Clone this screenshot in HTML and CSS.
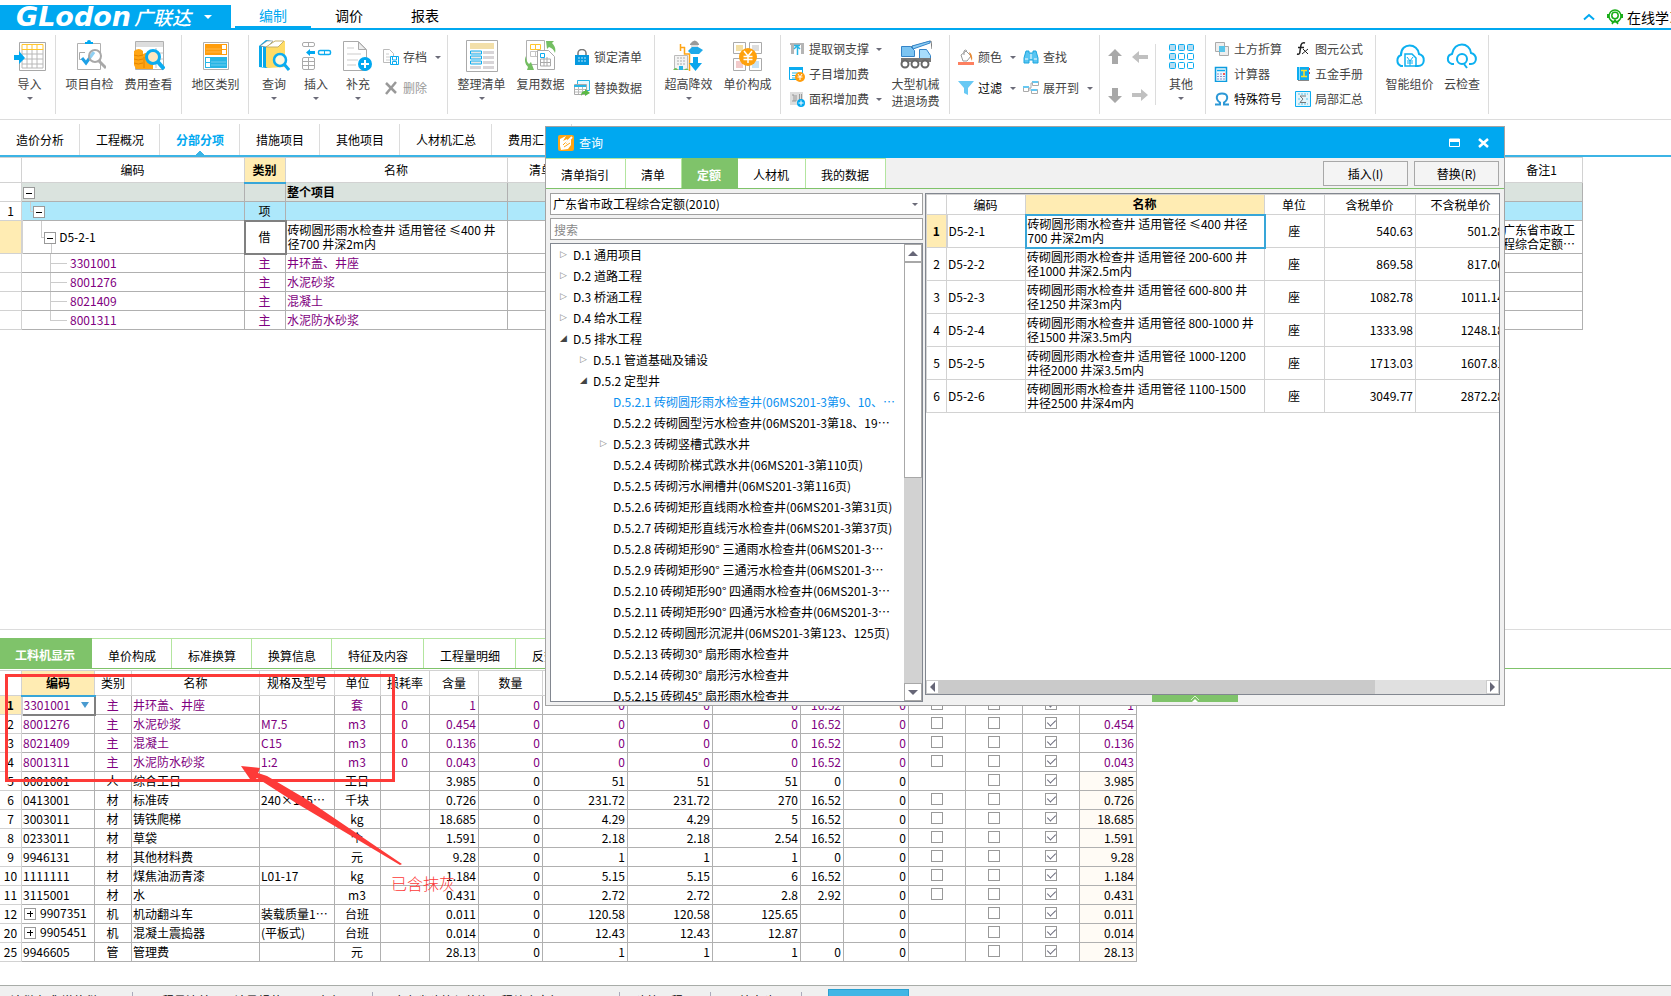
FILE: index.html
```
<!DOCTYPE html>
<html lang="zh-CN">
<head>
<meta charset="UTF-8" />
<meta name="viewport" content="width=device-width, initial-scale=1" />
<title>广联达 - 分部分项</title>
<link rel="stylesheet" href="styles.css">
</head>
<body>

<header class="topbar">
  <button class="logo" type="button"><span class="logo-en">GLodon</span><span class="logo-cn">广联达</span><i class="caret"></i></button>
  <nav class="menu">
    <a href="#" class="active">编制</a>
    <a href="#">调价</a>
    <a href="#">报表</a>
  </nav>
  <div class="online">
    <svg width="12" height="8" viewBox="0 0 12 8"><path d="M1 6.500 6 2l5 4.500" fill="none" stroke="#00a8f0" stroke-width="2"/></svg>
    <svg width="16" height="16" viewBox="0 0 16 16" fill="none" stroke="#1aad19"><circle cx="8" cy="7" r="6" stroke-width="1.500"/><circle cx="8" cy="6.500" r="3.200" stroke-width="1.500"/><path d="M1 5v4M15 5v4" stroke-width="2.500"/><path d="M5 15l3-4 3 4M4 11l2 3M12 11l-2 3" stroke-width="1.500"/></svg>
    <a href="#">在线学习</a>
  </div>
</header>

<div class="ribbon">
  <div class="group">
    <button class="big wide" type="button">
      <svg width="32" height="32" viewBox="0 0 32 32"><path d="M5.500 2.500h26v28h-26z" fill="#fff" stroke="#a8a8a8"/><path d="M8 14h21M8 19h21M8 24h21M13 9v19M18 9v19M23 9v19M8 28h21V9M8 9v19" fill="none" stroke="#b8b8b8"/><path d="M8 4.500h21v5H8zM13 4v5M18 4v5M23 4v5" fill="none" stroke="#ffc52e"/><path d="M0 15h5v-4l6 7-6 6v-4H0z" fill="#00a8f0"/></svg>
      <span>导入</span><i class="caret"></i>
    </button>
  </div>
  <div class="group">
    <button class="big" type="button">
      <svg width="32" height="32" viewBox="0 0 32 32"><path d="M3.500 3.500h23v26h-23z" fill="#fff" stroke="#b0b0b0"/><path d="M11 4V2h2a2 2 0 0 1 4 0h2v2z" fill="#00a8f0"/><path d="M11 12.500H5.500v7H8" fill="none" stroke="#a8a8a8"/><path d="m8 18 4 5 8-11" fill="none" stroke="#1ea0e6" stroke-width="3"/><circle cx="21" cy="16" r="6" fill="#fff" fill-opacity=".5" stroke="#a8a8a8" stroke-width="2"/><path d="m25 21 7 7" stroke="#a8a8a8" stroke-width="3"/></svg>
      <span>项目自检</span>
    </button>
    <button class="big" type="button">
      <svg width="32" height="32" viewBox="0 0 32 32"><path d="M2.500 1.500h28v28h-28z" fill="#fff" stroke="#b0b0b0"/><path d="M3 2h27v5H3z" fill="#ddd"/><path d="M20 13h10M20 19h10M23 8v20" stroke="#c4c4c4"/><path d="M1 11q5-4 9 0v3q5-3 10 0v15H3l-2-4z" fill="#ffa514"/><path d="M1 15q4 2 9 0M1 19q4 2 9 0M1 23q4 2 9 0M11 17v11" fill="none" stroke="#e38400"/><circle cx="20" cy="17" r="6.500" fill="#ffe8c0" stroke="#0cacf0" stroke-width="3"/><path d="m25 22 6 7" stroke="#0cacf0" stroke-width="4"/></svg>
      <span>费用查看</span>
    </button>
  </div>
  <div class="group">
    <button class="big" type="button">
      <svg width="32" height="32" viewBox="0 0 32 32"><path d="M3.500 2.500h25v27h-25z" fill="#fff" stroke="#b0b0b0"/><path d="M5 4h22v11H5z" fill="#ff9d0c"/><path d="M6 9h15M6 12h15" stroke="#ffb84c"/><path d="M22 5h4v4h-4zM22 10h4v4h-4z" fill="#fff"/><path d="M5 17h22v11H5z" fill="#27b5e5"/><path d="M11 22h15M11 25h15" stroke="#6fcdee"/><path d="M6 18h4v4H6zM6 23h4v4H6z" fill="#fff"/></svg>
      <span>地区类别</span>
    </button>
  </div>
  <div class="group">
    <button class="big narrow" type="button">
      <svg width="32" height="32" viewBox="0 0 32 32"><path d="m1 6 7-6 6 1v26l-6 1-7-1z" fill="#07a8ea"/><path d="M4.500 7v20" stroke="#fff"/><path d="m2 6 7-5 6 0-6 6z" fill="#fff" stroke="#777" stroke-width=".5"/><path d="m8 7 9-6h10v26l-17 1-2-1z" fill="#ffdc66"/><path d="m8 7 9-6h9l-6 6z" fill="#fff" stroke="#c5b06a"/><circle cx="22" cy="20" r="6" fill="#fff8df" stroke="#0cacf0" stroke-width="2.500"/><path d="m26 24 5 6" stroke="#0cacf0" stroke-width="3"/></svg>
      <span>查询</span><i class="caret"></i>
    </button>
    <button class="big narrow" type="button">
      <svg width="32" height="32" viewBox="0 0 32 32" fill="none"><rect x="2.500" y="2.500" width="12" height="4" rx="1.500" stroke="#aaa"/><path d="M8.500 2v4" stroke="#aaa"/><rect x="18.500" y="10.500" width="12" height="4" rx="1.500" stroke="#0cacf0" stroke-width="1.500"/><path d="M24.500 10v4" stroke="#0cacf0"/><path d="M6 12.500 10 9v2h5v3h-5v2z" fill="#00a8f0"/><rect x="2.500" y="17.500" width="12" height="12" rx="1.500" stroke="#aaa"/><path d="M2 21.500h12M2 25.500h12M8.500 18v11" stroke="#aaa"/></svg>
      <span>插入</span><i class="caret"></i>
    </button>
    <button class="big narrow" type="button">
      <svg width="32" height="32" viewBox="0 0 32 32"><path d="M1.500 1.500h15l8 8v21h-23z" fill="#fff" stroke="#aaa"/><path d="M16.500 2v7.500H24z" fill="#eee" stroke="#aaa"/><path d="M5 8h7M5 14h14M5 20h11M5 25h9" stroke="#ddd" stroke-width="1.500"/><circle cx="23" cy="24" r="7" fill="#00a8f0"/><path d="M23 20v8M19 24h8" stroke="#fff" stroke-width="2"/></svg>
      <span>补充</span><i class="caret"></i>
    </button>
    <div class="stack two">
      <button class="small" type="button">
        <svg width="16" height="16" viewBox="0 0 16 16"><path d="M.5.500h6l4 4v9H.5z" fill="#fff" stroke="#bbb"/><path d="M3 5h3M3 8h4M3 11h4" stroke="#ccc"/><path d="M7.500 7.500h8v8h-8z" fill="#fff" stroke="#0cacf0"/><path d="M9.500 8v3h4V8M9.500 15v-2.500h4V15" fill="none" stroke="#0cacf0"/></svg>
        <span>存档</span><i class="caret"></i>
      </button>
      <button class="small" type="button" disabled>
        <svg width="16" height="16" viewBox="0 0 16 16"><path d="m3 3 10 10M13 2 3 14" stroke="#999" stroke-width="2.500"/></svg>
        <span>删除</span>
      </button>
    </div>
  </div>
  <div class="group reuse">
    <button class="big" type="button">
      <svg width="32" height="32" viewBox="0 0 32 32"><path d="M.5.500h31v31H.5z" fill="#fff" stroke="#aaa"/><path d="M4 3h24v6H4z" fill="#f2dfaa"/><path d="M17 11h11v3H17zM17 16h11v3H17zM17 21h11v3H17zM4 26h11v3H4zM17 26h11v3H17z" fill="#d8d5d8"/><path d="M4.500 11h11v3h-11zM4.500 16h11v3h-11zM4.500 21h11v3h-11z" fill="#e8e8e8" stroke="#0cacf0"/></svg>
      <span>整理清单</span><i class="caret"></i>
    </button>
    <button class="big" type="button">
      <svg width="32" height="32" viewBox="0 0 32 32"><path d="M1.500.500h18v24h-18z" fill="#fff" stroke="#b0b0b0"/><path d="M5.500 4.500h10v5h-10zM10.500 4v5" fill="none" stroke="#ffc52e"/><path d="M5.500 11.500h10v5h-10zM10.500 11v5" fill="none" stroke="#c4c4c4"/><path d="M12.500 10.500h11l6 6v13h-17z" fill="#fff" stroke="#a8a8a8"/><path d="M15.500 19v7h10v-7zM19 17v9M22 17v9M15 22.500h10" fill="none" stroke="#aaa"/><path d="M15.500 13.500h4v4h-4z" fill="#fff" stroke="#0cacf0"/><path d="M21 1h8l-2 2c3 3 4 6 3 10-1-3-3-5-6-6l-2 2zM1 16c0 4 1 6 3 8l2-2 3 8H2l1-3C0 24-1 20 1 16z" fill="#74be62"/></svg>
      <span>复用数据</span>
    </button>
    <div class="stack two">
      <button class="small" type="button">
        <svg width="16" height="16" viewBox="0 0 16 16"><path d="M4 6V4a4 3.500 0 0 1 8 0v2" fill="none" stroke="#777" stroke-width="1.500"/><path d="M1 6h14v10H1z" fill="#0599df"/><path d="M4 9h8M4 12h8" stroke="#b8e6fb" stroke-dasharray="2 1"/></svg>
        <span>锁定清单</span>
      </button>
      <button class="small" type="button">
        <svg width="16" height="16" viewBox="0 0 16 16"><path d="M3.500.500h12v10h-12z" fill="#e9f7fd" stroke="#27b5e5"/><path d="M.5 4.500h12v10H.5z" fill="#fff" stroke="#aaa"/><path d="M0 5h12v2H0z" fill="#27b5e5"/><path d="M1 9.500h11M1 12h11M4.500 7v7M8.500 7v7" stroke="#bbb"/><path d="M7 16c0-4 2-5 4-5V9l5 4-5 3v-2c-2 0-3 0-4 2z" fill="#5ab946"/></svg>
        <span>替换数据</span>
      </button>
    </div>
  </div>
  <div class="group">
    <button class="big" type="button">
      <svg width="32" height="32" viewBox="0 0 32 32"><path d="M1.500 15.500h13v14h-13z" fill="#f4f4f4" stroke="#bbb"/><path d="M4 18h9M4 21h9M4 24h9" stroke="#c4c4c4" stroke-width="1.500" stroke-dasharray="2 1"/><path d="M0 30q3-4 5 0M11 30q2-3 5 0" fill="#6cbd58"/><path d="M6 26h4v4H6z" fill="#27b5e5"/><path d="M7.500 4v7M7 7.500h5M11.500 7v7h5v17" fill="none" stroke="#ffa514" stroke-width="1.500"/><path d="M17 4q5-7 9 0v1h-9z" fill="#999"/><path d="M18 5h7v3h-7z" fill="#ddd"/><path d="m15 11 4-4h6l5 3-4 4h-8z" fill="#1ea9e9"/><path d="M20 17h5v6h4l-6.500 8L16 23h4z" fill="#0ca6ed"/></svg>
      <span>超高降效</span><i class="caret"></i>
    </button>
    <button class="big" type="button">
      <svg width="32" height="32" viewBox="0 0 32 32"><path d="M1.500 2.500h12v11h-12zM17.500 2.500h12v11h-12zM1.500 18.500h12v12h-12zM17.500 18.500h12v12h-12z" fill="#fff" stroke="#aaa"/><path d="M4 5h7v6H4z" fill="#f3dfa4"/><path d="M20 5h7v6h-7z" fill="#ddd"/><path d="M4 21h7v7H4z" fill="#f2caca"/><path d="M20 21h7v7h-7z" fill="#c7e2f4"/><circle cx="16" cy="17" r="9" fill="#ffa10c"/><path d="m12 11 4 5 4-5M11.500 16.500h9M11.500 19.500h9M16 16v7" fill="none" stroke="#fff" stroke-width="1.500"/></svg>
      <span>单价构成</span>
    </button>
  </div>
  <div class="group">
    <div class="stack three wide-stack">
      <button class="small" type="button">
        <svg width="16" height="16" viewBox="0 0 16 16"><path d="M1 2h14v2H1zM2 4h3v9H2zM12 4h3v9h-3z" fill="#b5b5b5"/><path d="M5 4.500h6M8.500 4v10M5 8l3-3 3 3" fill="none" stroke="#27b5e5" stroke-width="1.500"/></svg>
        <span>提取钢支撑</span><i class="caret"></i>
      </button>
      <button class="small" type="button">
        <svg width="16" height="16" viewBox="0 0 16 16"><path d="M.5 1.500h13v12H.5z" fill="#fff" stroke="#0cacf0"/><path d="M0 1h14v3H0z" fill="#0cacf0"/><path d="M3 7h8M3 9.500h5M3 12h5" stroke="#27b5e5"/><circle cx="11" cy="11" r="5" fill="#ff9d0c"/><path d="m9 8 2 3 2-3M8.500 11h5M11 11v3" fill="none" stroke="#fff"/></svg>
        <span>子目增加费</span>
      </button>
      <button class="small" type="button">
        <svg width="16" height="16" viewBox="0 0 16 16"><path d="M1 1h13v13H1z" fill="#ddd"/><path d="M3 4h2v6M7 4v6H3M10.500 3v7M12.500 3v7" fill="none" stroke="#999"/><circle cx="12" cy="12" r="4" fill="#00a8f0"/><path d="M12 9.500v5M9.500 12h5" stroke="#fff"/></svg>
        <span>面积增加费</span><i class="caret"></i>
      </button>
    </div>
    <button class="big crane" type="button">
      <svg width="32" height="32" viewBox="0 0 32 32"><path d="M10 7 31 1l1 8" fill="none" stroke="#777"/><path d="m12 6 18-5v2L13 9z" fill="#8ccdf5" stroke="#3484c8"/><path d="M1.500 6.500h9l4 4v6h-13z" fill="#7cc4f2" stroke="#3484c8"/><path d="M19.500 9.500h7l4 6v5h-11z" fill="#a8dcfa" stroke="#3484c8"/><path d="M1 18h30v4H1z" fill="#777"/><g fill="#fff" stroke="#666" stroke-width="2"><circle cx="5" cy="24" r="3.500"/><circle cx="15" cy="24" r="3.500"/><circle cx="25" cy="24" r="3.500"/></g></svg>
      <span>大型机械<br>进退场费</span>
    </button>
  </div>
  <div class="group">
    <div class="stack two">
      <button class="small" type="button">
        <svg width="16" height="16" viewBox="0 0 16 16"><path d="m3 6 5-4 5 5-4 5H5z" fill="#fff" stroke="#999"/><path d="M6 6V2q1-2 3 0" fill="none" stroke="#999"/><path d="M11 3q4 2 3 9-1-2-2-5z" fill="#e88a34"/><path d="M0 13h16v3H0z" fill="#fd8060"/></svg>
        <span>颜色</span><i class="caret"></i>
      </button>
      <button class="small" type="button">
        <svg width="16" height="16" viewBox="0 0 16 16"><path d="M0 1h16l-6 7v7l-4-2V8z" fill="#68c9f4"/></svg>
        <span class="dark">过滤</span><i class="caret"></i>
      </button>
    </div>
    <div class="stack two">
      <button class="small" type="button">
        <svg width="16" height="16" viewBox="0 0 16 16"><path d="M3 2h3v2h4V2h3l2 7v5h-5v-3H6v3H1V9z" fill="#58c5f2" stroke="#1ca6df"/><path d="M2 10h3M11 10h3M8 5v5" stroke="#fff"/></svg>
        <span>查找</span>
      </button>
      <button class="small" type="button">
        <svg width="16" height="16" viewBox="0 0 16 16"><path d="M.5 6.500h5v5h-5zM9.500 1.500h6v4h-6zM8.500 9.500h6v4h-6z" fill="#fff" stroke="#aaa"/><path d="M0 6h6v2H0zM9 1h6v2H9zM8 9h6v2H8z" fill="#66c8f2"/><path d="M6 8h2V3h2M7 8v3" fill="none" stroke="#aaa"/></svg>
        <span>展开到</span><i class="caret"></i>
      </button>
    </div>
  </div>
  <div class="arrows">
    <button type="button" aria-label="上移"><svg width="16" height="16" viewBox="0 0 16 16"><path d="m8 0 7 7h-4v8H5V7H1z" fill="#a8a8a8"/></svg></button>
    <button type="button" aria-label="左移"><svg width="16" height="16" viewBox="0 0 16 16"><path d="m0 8 7-6v4h9v4H7v4z" fill="#c0c0c0"/></svg></button>
    <button type="button" aria-label="下移"><svg width="16" height="16" viewBox="0 0 16 16"><path d="m8 16 7-7h-4V1H5v8H1z" fill="#a8a8a8"/></svg></button>
    <button type="button" aria-label="右移"><svg width="16" height="16" viewBox="0 0 16 16"><path d="m16 8-7-6v4H0v4h9v4z" fill="#c0c0c0"/></svg></button>
  </div>
  <div class="group">
    <button class="big narrow" type="button">
      <svg width="32" height="32" viewBox="0 0 32 32" fill="#b5ddf2" stroke="#0cacf0"><rect x="4.500" y="4.500" width="6" height="6" rx="1"/><rect x="13.500" y="4.500" width="6" height="6" rx="1"/><rect x="22.500" y="4.500" width="6" height="6" rx="1"/><rect x="4.500" y="13.500" width="6" height="6" rx="1"/><rect x="13.500" y="13.500" width="6" height="6" rx="1" fill="#fff"/><rect x="22.500" y="13.500" width="6" height="6" rx="1" fill="#fff"/><rect x="4.500" y="22.500" width="6" height="6" rx="1"/><rect x="13.500" y="22.500" width="6" height="6" rx="1" fill="#fff"/><rect x="22.500" y="22.500" width="6" height="6" rx="1" fill="#fff"/></svg>
      <span>其他</span><i class="caret"></i>
    </button>
  </div>
  <div class="group tools">
    <div class="stack three">
      <button class="small" type="button">
        <svg width="16" height="16" viewBox="0 0 16 16"><path d="M1.500 1.500h9v9h-9zM5.500 5.500h9v9h-9z" fill="#eee" stroke="#aaa"/><path d="M5 5h6v6H5z" fill="#58c5ea"/></svg>
        <span>土方折算</span>
      </button>
      <button class="small" type="button">
        <svg width="16" height="16" viewBox="0 0 16 16"><path d="M1.500 1.500h11v14h-11z" fill="#eef8fd" stroke="#0c9ce0" stroke-width="1.500"/><path d="M3 4.500h8" stroke="#0cacf0" stroke-width="1.500"/><path d="M3 8h6M3 10.500h8M3 13h8" stroke="#8a8fd0" stroke-dasharray="2 1"/><path d="M9 7h2v2H9z" fill="#f55"/></svg>
        <span>计算器</span>
      </button>
      <button class="small" type="button">
        <svg width="16" height="16" viewBox="0 0 16 16"><path d="M1 13.500h5v-2C1 8 2 2.500 8 2.500S15 8 10 11.500v2h5" fill="none" stroke="#2c98d6" stroke-width="2"/></svg>
        <span class="dark">特殊符号</span>
      </button>
    </div>
    <div class="stack three">
      <button class="small" type="button">
        <svg width="16" height="16" viewBox="0 0 16 16" fill="none" stroke="#222"><path d="M2 13q3 1 3-3l1-6q1-3 4-2M3 6.500h6" stroke-width="1.500"/><path d="m8 8 5 5M13 8l-6 5"/></svg>
        <span>图元公式</span>
      </button>
      <button class="small" type="button">
        <svg width="16" height="16" viewBox="0 0 16 16"><path d="M2 1h12v13H2z" fill="#0cacf0"/><path d="M3 14.500h11" stroke="#888"/><path d="M6 4.500h6M9 4v6M6 10.500h6" stroke="#fde02c" stroke-width="1.500"/><path d="M4.500 1v13" stroke="#8adcff"/><path d="M14 2h1v2h-1zM14 6h1v2h-1z" fill="#e44"/></svg>
        <span>五金手册</span>
      </button>
      <button class="small" type="button">
        <svg width="16" height="16" viewBox="0 0 16 16"><path d="M.5.500h15v15H.5z" fill="#e3f4fb" stroke="#0cacf0"/><path d="M3 3h10M3 8h2M11 8h2M3 13h10" stroke="#58c5ea" stroke-dasharray="2 1"/><path d="M11 5H5l3 3-3 3.500h6" fill="none" stroke="#777"/></svg>
        <span>局部汇总</span>
      </button>
    </div>
  </div>
  <div class="group">
    <button class="big" type="button">
      <svg width="32" height="32" viewBox="0 0 32 32" fill="none" stroke="#0cb0f0" stroke-width="2"><path d="M9 26H7a6 6 0 0 1 0-11C7 2 24 3 25 14c7 2 6 12-1 12h-3"/><path d="M11 26V14h7l4 4v8z" stroke-width="1.500"/><path d="m13 17 3 4 3-4M13 21h6M13 23h6M16 21v5" stroke-width="1"/></svg>
      <span>智能组价</span>
    </button>
    <button class="big cloud-check" type="button">
      <svg width="32" height="32" viewBox="0 0 32 32" fill="none" stroke="#0cb0f0" stroke-width="2"><path d="M8 24H6C0 22 1 15 6 14 8 1 24 2 25 13c7 2 6 11 0 11h-2"/><circle cx="16" cy="19" r="5"/><path d="m18 24 3 4"/></svg>
      <span>云检查</span>
    </button>
  </div>
</div>

<nav class="pages">
  <a href="#">造价分析</a>
  <a href="#">工程概况</a>
  <a href="#" class="active">分部分项</a>
  <a href="#">措施项目</a>
  <a href="#">其他项目</a>
  <a href="#">人材机汇总</a>
  <a href="#">费用汇总</a>
</nav>

<main>
  <section class="bill">
    <table class="grid bill-table">
      <colgroup><col class="c22"><col class="c223"><col class="c41"><col class="c222"><col class="c104"><col class="c890"><col class="c81"></colgroup>
      <thead>
        <tr><th></th><th>编码</th><th class="picked">类别</th><th>名称</th><th>清单工程量</th><th></th><th>备注1</th></tr>
      </thead>
      <tbody>
        <tr class="total"><td class="no"></td><td class="code"><button class="fold" type="button" aria-label="收起"></button></td><td></td><td><b>整个项目</b></td><td></td><td></td><td></td></tr>
        <tr class="section"><td class="no">1</td><td class="code lv1"><button class="fold" type="button" aria-label="收起"></button></td><td class="mid">项</td><td></td><td></td><td></td><td></td></tr>
        <tr class="item"><td class="no current"></td><td class="code lv2"><button class="fold" type="button" aria-label="收起"></button> D5-2-1</td><td class="mid cell-focus">借</td><td>砖砌圆形雨水检查井 适用管径 ≤400 井<br>径700 井深2m内</td><td></td><td></td><td>广东省市政工<br>程综合定额…</td></tr>
        <tr class="main-mat"><td class="no"></td><td class="code lv3">3301001</td><td class="mid">主</td><td>井环盖、井座</td><td></td><td></td><td></td></tr>
        <tr class="main-mat"><td class="no"></td><td class="code lv3">8001276</td><td class="mid">主</td><td>水泥砂浆</td><td></td><td></td><td></td></tr>
        <tr class="main-mat"><td class="no"></td><td class="code lv3">8021409</td><td class="mid">主</td><td>混凝土</td><td></td><td></td><td></td></tr>
        <tr class="main-mat"><td class="no"></td><td class="code lv3 last">8001311</td><td class="mid">主</td><td>水泥防水砂浆</td><td></td><td></td><td></td></tr>
      </tbody>
    </table>
  </section>

  <section class="detail">
    <nav class="tabs">
      <a href="#" class="active">工料机显示</a>
      <a href="#">单价构成</a>
      <a href="#">标准换算</a>
      <a href="#">换算信息</a>
      <a href="#">特征及内容</a>
      <a href="#">工程量明细</a>
      <a href="#">反查图形</a>
    </nav>
    <table class="grid detail-table">
      <colgroup><col class="c22"><col class="c73"><col class="c38"><col class="c127"><col class="c75"><col class="c46"><col class="c49"><col class="c49"><col class="c64"><col class="c85"><col class="c85"><col class="c88"><col class="c43"><col class="c65"><col class="c57"><col class="c57"><col class="c57"><col class="c57"></colgroup>
      <thead>
        <tr><th></th><th class="picked">编码</th><th>类别</th><th>名称</th><th>规格及型号</th><th>单位</th><th>损耗率</th><th>含量</th><th>数量</th><th></th><th></th><th></th><th></th><th></th><th></th><th></th><th></th><th></th></tr>
      </thead>
      <tbody id="detailRows"></tbody>
    </table>
  </section>
</main>

<footer class="status">
  <span class="s1">计税方式:增值税</span>
  <span class="s2">工程量清单项目计量规范(2013-广东)</span>
  <span class="s3">广东省建筑与装饰工程综合定额(2010)</span>
  <span class="s4">建筑工程</span>
  <span class="s5">纯土建</span>
  <button type="button" aria-label="缩放"></button>
</footer>

<!-- query window -->
<div class="dialog" role="dialog" aria-labelledby="dialogTitle">
  <div class="dialog-title">
    <svg width="16" height="16" viewBox="0 0 16 16"><rect width="16" height="16" rx="2" fill="#ffa514"/><path d="m2 4 6-3-3 5 4-2 1 2 3-2v6l-3 4-7 1-1-4z" fill="#fff"/><path d="m5 10 4-4 3-1M6 12l6-4M8 9l6-7" fill="none" stroke="#ffa514"/><path d="m8 8 6-6" stroke="#fff" stroke-width="2"/></svg>
    <span id="dialogTitle">查询</span>
    <button type="button" aria-label="最大化"><svg width="12" height="10" viewBox="0 0 12 10"><path d="M.5 1h10v7.500H.5z" fill="none" stroke="#fff"/><path d="M0 1h11v3H0z" fill="#fff"/></svg></button>
    <button type="button" aria-label="关闭"><svg width="12" height="10" viewBox="0 0 12 10"><path d="m1 1 9 8M10 1 1 9" stroke="#fff" stroke-width="2.500"/></svg></button>
  </div>
  <div class="dialog-bar">
    <nav class="tabs">
      <a href="#">清单指引</a>
      <a href="#">清单</a>
      <a href="#" class="active">定额</a>
      <a href="#">人材机</a>
      <a href="#">我的数据</a>
    </nav>
    <button type="button" class="cmd">插入(I)</button>
    <button type="button" class="cmd">替换(R)</button>
  </div>
  <div class="dialog-body">
    <div class="left">
      <div class="library">
        <select aria-label="定额库"><option>广东省市政工程综合定额(2010)</option></select>
        <i class="caret"></i>
      </div>
      <input type="text" placeholder="搜索" aria-label="搜索">
      <div class="tree">
        <ul id="treeList"></ul>
        <div class="vbar"><i class="up"></i><i class="thumb"></i><i class="down"></i></div>
      </div>
    </div>
    <div class="right">
      <div class="quota">
        <div class="quota-view">
          <table class="grid quota-table">
            <colgroup><col class="c20"><col class="c79"><col class="c239"><col class="c60"><col class="c91"><col class="c91"></colgroup>
            <thead><tr><th></th><th>编码</th><th class="picked">名称</th><th>单位</th><th>含税单价</th><th>不含税单价</th></tr></thead>
            <tbody id="quotaRows"></tbody>
          </table>
        </div>
        <div class="hbar"><i class="prev"></i><i class="thumb"></i><i class="next"></i></div>
      </div>
      <button type="button" class="drawer" aria-label="展开"><svg width="10" height="7" viewBox="0 0 10 7"><path d="m1 5 4-4 4 4" fill="none" stroke="#d8f0d0"/><path d="m2 7 3-3 3 3z" fill="#fff"/></svg></button>
    </div>
  </div>
</div>

<!-- markup -->
<div class="mark-box"></div>
<svg class="mark-arrow" width="164" height="104" viewBox="0 0 164 104"><path d="M1 1 20 3 18 8 27 11 66 34 162 99 160 100 56 38 17 13 12 17z" fill="#fd3a38"/></svg>
<div class="mark-text">已含抹灰</div>

<script src="script.js"></script>
</body>
</html>
```
FILE: styles.css
```
* { box-sizing: border-box; }
body {
  margin: 0; height: 100vh; overflow: hidden; position: relative;
  display: flex; flex-direction: column;
  font-family: "Noto Sans CJK SC", "Liberation Sans", sans-serif;
  font-size: 12px; line-height: 14px; color: #000; background: #fff;
}
a { color: inherit; text-decoration: none; }
button { font: inherit; color: inherit; background: none; border: 0; padding: 0; }
svg { display: block; flex: none; }
ul { list-style: none; margin: 0; padding: 0; }

.caret {
  display: block; width: 0; height: 0; flex: none;
  border: 3px solid transparent; border-top-color: #6b6b78; border-bottom: 0;
}

/* top bar */
.topbar { display: flex; flex: none; height: 30px; padding-top: 5px; border-bottom: 2px solid #00a8f0; }
.logo {
  display: flex; align-items: center; width: 231px; padding-left: 16px;
  background: #00a8f0; color: #fff; white-space: nowrap;
}
.logo-en { font: italic bold 27px "DejaVu Sans", sans-serif; line-height: 22px; }
.logo-cn { font-size: 19px; font-style: italic; font-weight: 500; line-height: 22px; margin-left: 3px; }
.logo .caret { margin-left: 13px; border-width: 4px 4px 0; border-top-color: #fff; }
.menu { display: flex; font-size: 14px; line-height: 21px; padding-left: 4px; }
.menu a { width: 76px; text-align: center; border-bottom: 2px solid transparent; }
.menu .active { color: #00a8f0; border-color: #00a8f0; }
.online {
  display: flex; align-items: center; gap: 12px; width: 88px; margin-left: auto;
  font-size: 14px; white-space: nowrap; overflow: hidden;
}
.online a { margin-left: -8px; line-height: 20px; }

/* ribbon */
.ribbon { display: flex; flex: none; height: 90px; padding: 5px 0; border-bottom: 1px solid #dcdcdc; color: #444; }
.group { display: flex; padding: 0 3px 0 4px; border-right: 1px solid #dcdcdc; height: 79px; flex: none; }
.group:first-child { padding: 0; }
.big { display: flex; flex-direction: column; align-items: center; width: 59px; padding-top: 5px; line-height: 17px; white-space: nowrap; }
.big span { margin-top: 3px; }
.big .caret { margin-top: 5px; }
.big.wide { width: 55px; padding-left: 4px; }
.big.narrow { width: 42px; }
.stack { display: flex; flex-direction: column; padding-left: 4px; }
.stack.two { gap: 15px; padding-top: 14px; }
.stack.three { gap: 9px; padding-top: 6px; }
.small { display: flex; align-items: center; gap: 4px; height: 16px; white-space: nowrap; }
.small .caret { margin: 0 3px 0 auto; }
.two .small .caret { margin-left: 4px; }
.small:disabled { color: #999; }
.dark { color: #000; }
.reuse { padding-right: 12px; }
.wide-stack { width: 100px; }
.crane { width: 61px; }
.arrows { display: grid; grid-template-columns: 16px 16px; gap: 17px 9px; padding: 3px 7px 0; margin-top: 9px; height: 61px; border-right: 1px solid #dcdcdc; flex: none; }
.tools { gap: 9px; padding-right: 12px; }
.cloud-check { width: 46px; }

/* page tabs */
.pages { display: flex; flex: none; height: 37px; padding-top: 4px; border-bottom: 2px solid #3cb4e5; }
.pages a { padding: 0 15px 0 16px; line-height: 31px; border-right: 1px solid #dcdcdc; }
.pages .active {
  color: #00a8f0; font-weight: bold;
  background: linear-gradient(45deg, #3cb4e5 50%, transparent 51%) 40px 100% / 4px 4px no-repeat, linear-gradient(-45deg, #3cb4e5 50%, transparent 51%) 36px 100% / 4px 4px no-repeat;
}

/* grids */
main { flex: 1; min-height: 0; display: flex; flex-direction: column; }
.grid { border-collapse: collapse; table-layout: fixed; width: 0; margin-left: -1px; }
.grid th, .grid td { border: 1px solid #b0b0b0; padding: 0 2px 0 1px; overflow: hidden; white-space: nowrap; }
.grid th { font-weight: normal; border-color: #d2d2d2; }
.grid td.no { text-align: center; padding: 0; border-color: #d2d2d2; }
.grid .picked { background: #ffecb3; font-weight: bold; border-bottom: 2px solid #38a6d8; }
.grid .current { background: #ffecb3; font-weight: bold; border-right: 2px solid #38a6d8; }
.grid .mid { text-align: center; }
.grid .num { text-align: right; }
.grid tr.main-mat { color: #800080; }
.grid tr.main-mat .no { color: #000; }
.c20 { width: 20px; } .c22 { width: 22px; } .c38 { width: 37px; } .c41 { width: 41px; }
.c43 { width: 43px; } .c46 { width: 46px; } .c49 { width: 49px; } .c57 { width: 57px; }
.c60 { width: 60px; } .c64 { width: 64px; } .c65 { width: 65px; } .c73 { width: 73px; }
.c75 { width: 75px; } .c79 { width: 79px; } .c81 { width: 81px; } .c85 { width: 85px; }
.c88 { width: 88px; } .c91 { width: 91px; } .c104 { width: 104px; } .c127 { width: 128px; }
.c222 { width: 222px; } .c223 { width: 223px; } .c239 { width: 239px; } .c890 { width: 890px; }

.bill { flex: 1; min-height: 0; overflow: hidden; border-bottom: 1px solid #dcdcdc; }
.bill-table th { height: 25px; }
.bill-table td { height: 19px; }
.bill-table .item td { height: 33px; }
.total td { background: #dae3de; }
.section td { background: #ade8fb; }
.grid .total .no, .grid .section .no { background: #fff; }
.grid .cell-focus { border: 2px solid #808080; }
.fold {
  display: inline-block; width: 12px; height: 12px; vertical-align: middle; border: 1px solid #999;
  background: linear-gradient(#000, #000) center / 6px 1px no-repeat, #fff;
}
.fold.plus { background: linear-gradient(#000, #000) center / 6px 1px no-repeat, linear-gradient(#000, #000) center / 1px 6px no-repeat, #fff; }
.lv1 .fold { margin-left: 10px; }
.lv2 .fold { margin-left: 20px; margin-right: 1px; }
.grid .lv3 { padding-left: 48px; }
.section .lv1 { background: linear-gradient(#ccc, #ccc) 8px 0 / 1px 50% no-repeat, linear-gradient(#ccc, #ccc) 8px 50% / 6px 1px no-repeat, #ade8fb; }
.lv2 { background: linear-gradient(#ccc, #ccc) 18px 0 / 1px 50% no-repeat, linear-gradient(#ccc, #ccc) 18px 50% / 6px 1px no-repeat, linear-gradient(#ccc, #ccc) 28px 100% / 1px 50% no-repeat; }
.lv3 { background: linear-gradient(#ccc, #ccc) 28px 0 / 1px 100% no-repeat, linear-gradient(#ccc, #ccc) 28px 50% / 17px 1px no-repeat; }
.lv3.last { background-size: 1px 50%, 17px 1px; }

/* green tabs */
.tabs { display: flex; border-bottom: 1px solid #7fc36a; }
.tabs a { padding: 0 15px 0 16px; height: 30px; line-height: 33px; border: solid #b3e59f; border-width: 1px 1px 0 0; background: #fff; white-space: nowrap; }
.tabs .active { background: #7fc36a; border-color: #7fc36a; color: #fff; font-weight: bold; }

.detail { flex: 0 0 355px; padding-top: 8px; }
.detail .tabs { margin-bottom: 1px; }
.detail .tabs .active { padding-left: 15px; padding-right: 16px; line-height: 31px; }
.detail-table th { height: 25px; padding: 0; }
.detail-table td { height: 19px; }
.detail-table td:last-child { background: #fffbf5; }
.detail-table .main-mat td:last-child { background: #fff; }
.detail-table .cell-focus { border: 2px solid #808080; border-left-color: #38a6d8; border-top-color: #38a6d8; }
.cell-focus .caret { float: right; margin: 4px 3px 0; border-width: 6px 4px 0; border-top-color: #4a9bd0; }
.detail-table .fold { margin: 0 4px 2px 1px; }
.check { appearance: none; display: block; width: 12px; height: 12px; margin: 0 auto 2px; border: 1px solid #999; background: #fff; }
.check:checked::before {
  content: ""; display: block; width: 4px; height: 7px; margin: 0 0 0 3px;
  border: solid #667; border-width: 0 1px 1px 0; transform: rotate(45deg);
}

/* status bar */
.status { flex: 0 0 11px; display: flex; overflow: hidden; border-top: 1px solid #a8aca8; background: #f0f0f0; white-space: nowrap; padding-left: 10px; }
.status span { margin-top: 6px; height: 20px; border-right: 1px solid #aab; line-height: 18px; }
.s1 { width: 123px; }
.s2 { width: 240px; padding-left: 17px; }
.s3 { width: 247px; padding-left: 20px; }
.s4 { width: 91px; padding-left: 15px; }
.s5 { width: 91px; padding-left: 28px; }
.status button { width: 81px; height: 20px; margin: 3px 0 0 26px; background: #42b6e5; border: 1px solid #2a9fd0; }

/* query window */
.dialog {
  position: absolute; left: 545px; top: 126px; width: 960px; height: 580px;
  display: flex; flex-direction: column; background: #f1f1f1; border: 1px solid #a3a3a3;
}
.dialog-title { display: flex; align-items: center; gap: 5px; height: 31px; padding: 0 14px 0 12px; background: #00a8f0; color: #fff; flex: none; }
.dialog-title span { margin-right: auto; }
.dialog-title button + button { margin-left: 12px; }
.dialog-bar { display: flex; gap: 6px; border-bottom: 1px solid #7fc36a; padding-right: 5px; flex: none; }
.dialog-bar .tabs { border: 0; margin-right: auto; }
.dialog-bar .tabs a { padding: 0 16px 0 15px; line-height: 32px; }
.dialog-bar .tabs .active { line-height: 31px; }
.cmd { width: 85px; height: 25px; margin-top: 3px; border: 1px solid #a8a8a8; background: #f4f4f4; }
.dialog-body { flex: 1; min-height: 0; display: flex; gap: 2px; padding: 4px 4px 3px; }
.left { width: 373px; display: flex; flex-direction: column; gap: 3px; }
.library { display: flex; align-items: center; height: 22px; padding-right: 4px; border: 1px solid #a0a0a0; background: #fff; flex: none; }
.library select { appearance: none; flex: 1; height: 20px; padding: 0 2px; border: 0; background: none; font: inherit; color: #000; }
.left input { width: 100%; height: 22px; padding: 0 3px; border: 1px solid #a0a0a0; font: inherit; flex: none; }
.left input::placeholder { color: #888; }
.tree { flex: 1; min-height: 0; display: flex; border: 1px solid #828790; background: #fff; overflow: hidden; }
.tree ul { flex: 1; overflow: hidden; }
.tree li { display: flex; align-items: center; height: 21px; white-space: nowrap; padding-left: 9px; }
.tree li.d2 { padding-left: 29px; }
.tree li.d3 { padding-left: 49px; }
.tree li.on { color: #0a90f0; }
.tree .tw { width: 13px; height: 12px; flex: none; font: 9px "DejaVu Sans", sans-serif; line-height: 10px; }
.tree .shut::before { content: "▷"; color: #888; }
.tree .open::before { content: "◢"; color: #444; }
.vbar { width: 18px; display: flex; flex-direction: column; background: #d2d2d2; }
.vbar i { border: 1px solid #a8a8a8; background: #fff; display: flex; align-items: center; justify-content: center; }
.vbar .up, .vbar .down { height: 18px; }
.vbar .thumb { height: 216px; }
.vbar .down { margin-top: auto; }
.up::before, .down::before, .prev::before, .next::before { content: ""; border: 5px solid transparent; }
.up::before { border-bottom-color: #667; border-top: 0; }
.down::before { border-top-color: #667; border-bottom: 0; }
.prev::before { border-right-color: #667; border-left: 0; }
.next::before { border-left-color: #667; border-right: 0; }
.right { flex: 1; min-width: 0; display: flex; flex-direction: column; }
.quota { flex: 1; min-height: 0; display: flex; flex-direction: column; border: 1px solid #828790; background: #fff; }
.quota-view { flex: 1; overflow: hidden; }
.quota-table { margin-left: 0; }
.quota-table th, .quota-table td { border-color: #d2d2d2; }
.quota-table th { height: 20px; }
.quota-table td { height: 33px; }
.quota-table td.cell-focus { border: 2px solid #38a6d8; }
.hbar { display: flex; height: 14px; background: #e0e0e0; }
.hbar i { display: flex; align-items: center; justify-content: center; }
.hbar .prev, .hbar .next { width: 13px; background: #fff; border: 1px solid #ccc; }
.hbar .thumb { width: 436px; background: #cacaca; }
.hbar .next { margin-left: auto; }
.drawer { width: 86px; height: 7px; margin-left: 227px; background: #7fc36a; display: flex; justify-content: center; }

/* markup over the page */
.mark-box { position: absolute; left: 5px; top: 674px; width: 390px; height: 108px; border: 3px solid #fd3a38; }
.mark-arrow { position: absolute; left: 240px; top: 765px; }
.mark-text { position: absolute; left: 391px; top: 873px; font-size: 16px; line-height: 20px; font-weight: 300; color: #fd3a38; }
```
FILE: script.js
```
// no, code, type, name, spec, unit, loss, content, qty, price1, price2, price3, tax, sum, flag1, flag2, flag3, total
const detail = [
  ['1', '3301001', '主', '井环盖、井座', '', '套', '0', '1', '0', '0', '0', '0', '16.52', '0', 0, 0, 1, '1'],
  ['2', '8001276', '主', '水泥砂浆', 'M7.5', 'm3', '0', '0.454', '0', '0', '0', '0', '16.52', '0', 0, 0, 1, '0.454'],
  ['3', '8021409', '主', '混凝土', 'C15', 'm3', '0', '0.136', '0', '0', '0', '0', '16.52', '0', 0, 0, 1, '0.136'],
  ['4', '8001311', '主', '水泥防水砂浆', '1:2', 'm3', '0', '0.043', '0', '0', '0', '0', '16.52', '0', 0, 0, 1, '0.043'],
  ['5', '0001001', '人', '综合工日', '', '工日', '', '3.985', '0', '51', '51', '51', '0', '0', '', 0, 1, '3.985'],
  ['6', '0413001', '材', '标准砖', '240×115…', '千块', '', '0.726', '0', '231.72', '231.72', '270', '16.52', '0', 0, 0, 1, '0.726'],
  ['7', '3003011', '材', '铸铁爬梯', '', 'kg', '', '18.685', '0', '4.29', '4.29', '5', '16.52', '0', 0, 0, 1, '18.685'],
  ['8', '0233011', '材', '草袋', '', '个', '', '1.591', '0', '2.18', '2.18', '2.54', '16.52', '0', 0, 0, 1, '1.591'],
  ['9', '9946131', '材', '其他材料费', '', '元', '', '9.28', '0', '1', '1', '1', '0', '0', 0, 0, 1, '9.28'],
  ['10', '1111111', '材', '煤焦油沥青漆', 'L01-17', 'kg', '', '1.184', '0', '5.15', '5.15', '6', '16.52', '0', 0, 0, 1, '1.184'],
  ['11', '3115001', '材', '水', '', 'm3', '', '0.431', '0', '2.72', '2.72', '2.8', '2.92', '0', 0, 0, 1, '0.431'],
  ['12', '+9907351', '机', '机动翻斗车', '装载质量1…', '台班', '', '0.011', '0', '120.58', '120.58', '125.65', '', '0', '', 0, 1, '0.011'],
  ['20', '+9905451', '机', '混凝土震捣器', '(平板式)', '台班', '', '0.014', '0', '12.43', '12.43', '12.87', '', '0', '', 0, 1, '0.014'],
  ['25', '9946605', '管', '管理费', '', '元', '', '28.13', '0', '1', '1', '1', '0', '0', '', 0, 1, '28.13']
];

const tree = [
  [1, 'shut', 'D.1 通用项目'],
  [1, 'shut', 'D.2 道路工程'],
  [1, 'shut', 'D.3 桥涵工程'],
  [1, 'shut', 'D.4 给水工程'],
  [1, 'open', 'D.5 排水工程'],
  [2, 'shut', 'D.5.1 管道基础及铺设'],
  [2, 'open', 'D.5.2 定型井'],
  [3, '', 'D.5.2.1 砖砌圆形雨水检查井(06MS201-3第9、10、…'],
  [3, '', 'D.5.2.2 砖砌圆型污水检查井(06MS201-3第18、19…'],
  [3, 'shut', 'D.5.2.3 砖砌竖槽式跌水井'],
  [3, '', 'D.5.2.4 砖砌阶梯式跌水井(06MS201-3第110页)'],
  [3, '', 'D.5.2.5 砖砌污水闸槽井(06MS201-3第116页)'],
  [3, '', 'D.5.2.6 砖砌矩形直线雨水检查井(06MS201-3第31页)'],
  [3, '', 'D.5.2.7 砖砌矩形直线污水检查井(06MS201-3第37页)'],
  [3, '', 'D.5.2.8 砖砌矩形90° 三通雨水检查井(06MS201-3…'],
  [3, '', 'D.5.2.9 砖砌矩形90° 三通污水检查井(06MS201-3…'],
  [3, '', 'D.5.2.10 砖砌矩形90° 四通雨水检查井(06MS201-3…'],
  [3, '', 'D.5.2.11 砖砌矩形90° 四通污水检查井(06MS201-3…'],
  [3, '', 'D.5.2.12 砖砌圆形沉泥井(06MS201-3第123、125页)'],
  [3, '', 'D.5.2.13 砖砌30° 扇形雨水检查井'],
  [3, '', 'D.5.2.14 砖砌30° 扇形污水检查井'],
  [3, '', 'D.5.2.15 砖砌45° 扇形雨水检查井']
];

const quota = [
  ['D5-2-1', '砖砌圆形雨水检查井 适用管径 ≤400 井径<br>700 井深2m内', '540.63', '501.28'],
  ['D5-2-2', '砖砌圆形雨水检查井 适用管径 200-600 井<br>径1000 井深2.5m内', '869.58', '817.06'],
  ['D5-2-3', '砖砌圆形雨水检查井 适用管径 600-800 井<br>径1250 井深3m内', '1082.78', '1011.14'],
  ['D5-2-4', '砖砌圆形雨水检查井 适用管径 800-1000 井<br>径1500 井深3.5m内', '1333.98', '1248.18'],
  ['D5-2-5', '砖砌圆形雨水检查井 适用管径 1000-1200<br>井径2000 井深3.5m内', '1713.03', '1607.81'],
  ['D5-2-6', '砖砌圆形雨水检查井 适用管径 1100-1500<br>井径2500 井深4m内', '3049.77', '2872.28']
];

const classes = ['no', '', 'mid', '', '', 'mid', 'mid', 'num', 'num', 'num', 'num', 'num', 'num', 'num'];

function detailCell(value, col, row) {
  if (col >= 14 && col <= 16) {
    if (value === '') return '<td></td>';
    return `<td><input type="checkbox" class="check" aria-label="第${detail[row][0]}行"${value ? ' checked' : ''}></td>`;
  }
  let cls = classes[col] || (col === 17 ? 'num' : '');
  let html = value;
  if (col === 1 && value[0] === '+') html = '<button class="fold plus" type="button" aria-label="展开"></button>' + value.slice(1);
  if (row === 0 && col === 0) cls += ' current';
  if (row === 0 && col === 1) {
    cls = 'cell-focus';
    html = '<i class="caret"></i>' + value;
  }
  return `<td class="${cls}">${html}</td>`;
}

document.getElementById('detailRows').innerHTML = detail
  .map((r, i) => `<tr class="${i < 4 ? 'main-mat' : ''}">${r.map((v, c) => detailCell(v, c, i)).join('')}</tr>`)
  .join('');

document.getElementById('treeList').innerHTML = tree
  .map(([depth, state, text], i) => `<li class="d${depth}${i === 7 ? ' on' : ''}"><i class="tw ${state}"></i>${text}</li>`)
  .join('');

document.getElementById('quotaRows').innerHTML = quota
  .map((r, i) => `<tr><td class="no${i ? '' : ' current'}">${i + 1}</td><td>${r[0]}</td><td class="${i ? '' : 'cell-focus'}">${r[1]}</td><td class="mid">座</td><td class="num">${r[2]}</td><td class="num">${r[3]}</td></tr>`)
  .join('');
```
